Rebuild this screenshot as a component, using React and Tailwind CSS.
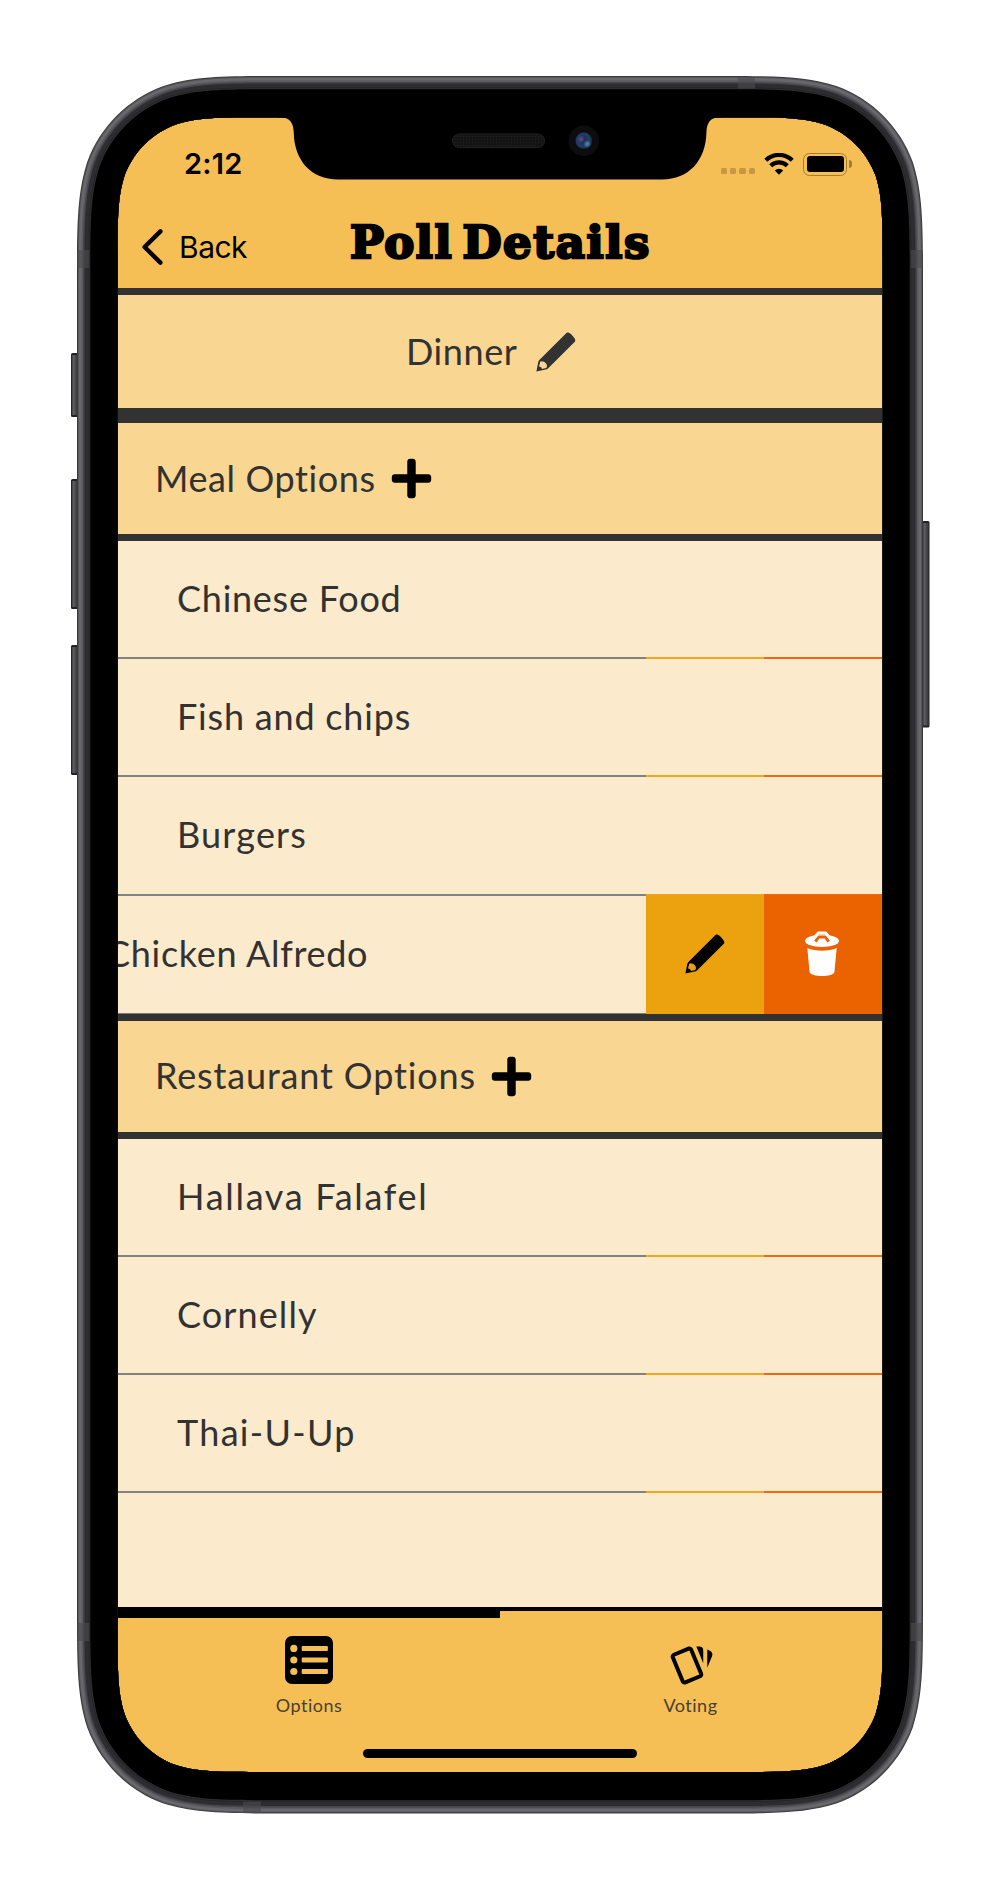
import { FaPlus } from "react-icons/fa";

// Rounded rectangle with continuous-curvature corners.
function squircle(x, y, w, h, r) {
  const a = 1.528665 * r, b = 1.088493 * r, c = 0.868407 * r;
  const d = 0.631494 * r, e = 0.074911 * r, f = 0.372824 * r, g = 0.169059 * r;
  const X = x + w, Y = y + h;
  return [
    `M${x + a},${y} L${X - a},${y}`,
    `C${X - b},${y} ${X - c},${y} ${X - d},${y + e}`,
    `C${X - f},${y + g} ${X - g},${y + f} ${X - e},${y + d}`,
    `C${X},${y + c} ${X},${y + b} ${X},${y + a}`,
    `L${X},${Y - a}`,
    `C${X},${Y - b} ${X},${Y - c} ${X - e},${Y - d}`,
    `C${X - g},${Y - f} ${X - f},${Y - g} ${X - d},${Y - e}`,
    `C${X - c},${Y} ${X - b},${Y} ${X - a},${Y}`,
    `L${x + a},${Y}`,
    `C${x + b},${Y} ${x + c},${Y} ${x + d},${Y - e}`,
    `C${x + f},${Y - g} ${x + g},${Y - f} ${x + e},${Y - d}`,
    `C${x},${Y - c} ${x},${Y - b} ${x},${Y - a}`,
    `L${x},${y + a}`,
    `C${x},${y + b} ${x},${y + c} ${x + e},${y + d}`,
    `C${x + g},${y + f} ${x + f},${y + g} ${x + d},${y + e}`,
    `C${x + c},${y} ${x + b},${y} ${x + a},${y} Z`,
  ].join(" ");
}

const SCREEN = squircle(117.7, 117.5, 764.8, 1654.5, 92);

const RINGS = [
  [0, "#3b3b3f"],
  [1, "#55555a"],
  [2, "#68686d"],
  [4.5, "#5a5a5f"],
  [6, "#45454a"],
  [7.5, "#2d2c31"],
  [11.5, "#242328"],
  [12.3, "#303033"],
  [13.3, "#000000"],
];

const SIDE_BUTTONS = [
  [71, 353, 64],
  [71, 479, 130],
  [71, 645, 130],
  [922, 521, 206.5],
];

const BANDS = [
  [77.5, 250, 11.5, 18],
  [911, 250, 11.5, 18],
  [77.5, 1623, 11.5, 18],
  [911, 1623, 11.5, 18],
  [738, 77.5, 17, 11],
  [243, 1801.5, 18, 11],
];

function PhoneFrame() {
  return (
    <svg className="pointer-events-none absolute inset-0" width="1000" height="1890" viewBox="0 0 1000 1890" aria-hidden="true">
      <defs>
        <linearGradient id="btn" x1="0" x2="1" y1="0" y2="0">
          <stop offset="0" stopColor="#3c3c40" />
          <stop offset="0.3" stopColor="#5d5d62" />
          <stop offset="1" stopColor="#303034" />
        </linearGradient>
        <radialGradient id="lens" cx="0.45" cy="0.45" r="0.55">
          <stop offset="0" stopColor="#1c2148" />
          <stop offset="0.7" stopColor="#1f4068" />
          <stop offset="1" stopColor="#16263c" />
        </radialGradient>
        <radialGradient id="glow1">
          <stop offset="0" stopColor="#6a4a94" />
          <stop offset="1" stopColor="#6a4a94" stopOpacity="0" />
        </radialGradient>
        <radialGradient id="glow2">
          <stop offset="0" stopColor="#4d93b8" />
          <stop offset="1" stopColor="#4d93b8" stopOpacity="0" />
        </radialGradient>
        <pattern id="mesh" width="3" height="3" patternUnits="userSpaceOnUse">
          <rect width="3" height="3" fill="#131313" />
          <circle cx="1.5" cy="1.5" r="0.8" fill="#202020" />
        </pattern>
      </defs>
      {SIDE_BUTTONS.map(([x, y, h]) => (
        <g key={`${x}-${y}`}>
          <rect x={x} y={y} width="7.5" height={h} rx="1.5" fill="#222226" />
          <rect x={x + 0.8} y={y + 2} width="6" height={h - 4} fill="url(#btn)" />
        </g>
      ))}
      {RINGS.map(([i, color]) => (
        <path
          key={i}
          fillRule="evenodd"
          fill={color}
          d={`${squircle(77 + i, 76 + i, 846 - 2 * i, 1737.5 - 2 * i, 136 - i)} ${SCREEN}`}
        />
      ))}
      {BANDS.map(([x, y, w, h]) => (
        <rect key={`${x}-${y}`} x={x} y={y} width={w} height={h} fill="#4b4b4d" opacity="0.6" />
      ))}
      <path
        fill="#000"
        d="M278,116 V117.5 H281 C290,117.5 293.5,123 293.8,133 C294.2,160 311,179.5 338,179.5 H662 C689,179.5 705.8,160 706.4,133 C706.7,123 710,117.5 719,117.5 H722 V116 Z"
      />
      <rect x="452.5" y="134" width="92" height="13.5" rx="6.7" fill="url(#mesh)" stroke="#222222" strokeWidth="1" />
      <circle cx="583.8" cy="140.8" r="15.3" fill="#0d0d0f" />
      <circle cx="583.8" cy="140.8" r="8.3" fill="url(#lens)" />
      <circle cx="581.2" cy="139.3" r="4" fill="url(#glow1)" />
      <circle cx="587.2" cy="144" r="4" fill="url(#glow2)" />
    </svg>
  );
}

function Pencil() {
  return (
    <svg width="40" height="40" viewBox="0 0 40 40" fill="currentColor" fillRule="evenodd">
      <path d="M30.2 1.2 C31.2 .2 32.8 .4 35.4 2.6 L37.6 4.9 C39.6 7.4 39.7 8.8 38.8 9.7 L12.2 36.3 C11.4 37.1 10.6 37.4 9.6 37.6 L.4 39.4 L2.2 30.2 C2.4 29.3 2.8 28.6 3.6 27.8 Z M4.2 29.8 L3 34.5 C4.8 34.6 5.8 35.6 5.9 37 L10.2 36 C11.4 34.4 11.2 32.6 9.6 31.1 C8 29.4 5.8 28.6 4.2 29.8 Z" />
    </svg>
  );
}

function Trash() {
  return (
    <svg width="34" height="46" viewBox="0 0 34 46">
      <path fill="#fff" d="M2.3 17 C10 20.6 24 20.6 31.7 17 L29.4 41.2 C28.6 43.6 23.5 45 17 45 S5.4 43.6 4.6 41.2 Z" />
      <ellipse cx="17" cy="9.8" rx="17" ry="6.2" fill="#fff" />
      <path fill="none" stroke="#eb6200" strokeWidth="3" d="M10.4 10.6 L13.6 6 H20.4 L23.6 10.6" />
      <path fill="none" stroke="#fff" strokeWidth="3" strokeLinejoin="round" d="M10 6 L13.4 2 H20.6 L24 6" />
    </svg>
  );
}

function ListIcon() {
  return (
    <svg width="48" height="48" viewBox="0 0 48 48">
      <rect width="48" height="48" rx="7" fill="#000" />
      <g fill="#f6bf55">
        {[12.4, 24, 35.5].map((y) => (
          <g key={y}>
            <circle cx="8.8" cy={y} r="3.6" />
            <rect x="16.7" y={y - 2.5} width="26.2" height="5" rx="1" />
          </g>
        ))}
      </g>
    </svg>
  );
}

function CardsIcon() {
  return (
    <svg className="translate-y-[6px]" width="48" height="48" viewBox="0 0 24 24" fill="#000">
      <path d="M11.19,2.25C10.93,2.25 10.67,2.31 10.42,2.4L3.06,5.45C2.04,5.87 1.55,7.04 1.97,8.05L6.93,20C7.24,20.77 7.97,21.23 8.74,21.25C9,21.25 9.27,21.22 9.53,21.1L16.9,18.05C17.65,17.74 18.11,17 18.13,16.25C18.14,16 18.09,15.71 18,15.45L13,3.5C12.71,2.73 11.97,2.26 11.19,2.25M14.67,2.25L18.12,10.6V4.25A2,2 0 0,0 16.12,2.25M20.13,3.79V12.82L22.56,6.96C22.97,5.94 22.5,4.78 21.47,4.36M11.19,4.22L16.17,16.24L8.78,19.3L3.8,7.29L11.19,4.22Z" />
    </svg>
  );
}

function StatusBar() {
  return (
    <div className="flex h-[92px] items-start justify-between pt-[29px] pr-[31px] pl-[66px]">
      <span className="font-[Inter,sans-serif] text-[29px] leading-[36px] font-semibold tracking-[0.2px]">2:12</span>
      <div className="flex h-[36px] items-center gap-[9px]">
        <div className="mt-[14px] flex gap-[3px]">
          {[0, 1, 2, 3].map((i) => (
            <span key={i} className="h-[6.5px] w-[6.3px] rounded-[1.5px] bg-[#c59944]" />
          ))}
        </div>
        <svg width="30" height="22" viewBox="0 0 30 22" fill="none" stroke="#000" strokeWidth="4.2">
          <path d="M1.8 7.3 A18.8 18.8 0 0 1 28.2 7.3" />
          <path d="M6.7 12.8 A11.8 11.8 0 0 1 23.3 12.8" />
          <path stroke="none" fill="#000" d="M15 21.8 L10.8 17.4 A6 6 0 0 1 19.2 17.4 Z" />
        </svg>
        <div className="flex items-center gap-[2px]">
          <div className="h-[23px] w-[44px] rounded-[6.5px] border border-[#a27d38] p-[2.5px]">
            <div className="h-full rounded-[3px] bg-black" />
          </div>
          <div className="h-[8px] w-[3px] rounded-r-full bg-[#a27d38]" />
        </div>
      </div>
    </div>
  );
}

function Header() {
  return (
    <header className="h-[178px] border-b-[7px] border-[#323232] bg-[#f6bf55] text-black">
      <StatusBar />
      <div className="grid grid-cols-[232px_300px_1fr] items-center pt-[9px]">
        <button className="flex h-[50px] items-center gap-[16px] pt-[8px] pl-[24px]">
          <svg width="21" height="36" viewBox="0 0 21 36" fill="none" stroke="#000" strokeWidth="4.4" strokeLinecap="round" strokeLinejoin="round">
            <path d="M18.4 2.4 L2.6 18 L18.4 33.6" />
          </svg>
          <span className="font-[Inter,sans-serif] text-[30px] leading-[36px] tracking-[-0.5px]">Back</span>
        </button>
        <h1 className="text-center font-['DejaVu_Serif',serif] text-[45px] leading-[50px] font-bold tracking-[1.6px] whitespace-nowrap [word-spacing:-8px] [-webkit-text-stroke:2.6px_black]">
          Poll Details
        </h1>
      </div>
    </header>
  );
}

function SectionHeader({ children, tracking }) {
  return (
    <div className="flex h-[118px] items-center gap-[13px] border-b-[7px] border-[#323232] bg-[#f9d692] pl-[37px]">
      <span className={`-mt-[2px] ${tracking}`}>{children}</span>
      <FaPlus className="size-[45px] text-black" />
    </div>
  );
}

function Row({ children, tracking }) {
  return (
    <div className="flex h-[118.2px] flex-col">
      <div className={`flex flex-1 items-center pb-[2px] pl-[59px] ${tracking}`}>{children}</div>
      <div className="flex h-[2px]">
        <span className="flex-1 bg-[#83827f]" />
        <span className="w-[118px] bg-[#efa722]" />
        <span className="w-[119px] bg-[#ef6814]" />
      </div>
    </div>
  );
}

function SwipedRow({ children }) {
  return (
    <div className="flex h-[118.2px]">
      <div className="flex w-[528px] items-center border-b border-[#7b7b79]">
        <span className="-mt-[2px] -ml-[12px] tracking-[0.7px] whitespace-nowrap">{children}</span>
      </div>
      <button className="-mt-px grid w-[118px] place-items-center bg-[#eca20f] text-black">
        <Pencil />
      </button>
      <button className="-mt-px grid w-[119px] place-items-center bg-[#eb6200] pr-[3px]">
        <Trash />
      </button>
    </div>
  );
}

function Tab({ icon, label, active }) {
  return (
    <button className="flex flex-col items-center text-[18px] leading-[24px] tracking-[0.5px] text-[#4a4030]">
      <span className={active ? "h-[7px] w-full bg-black" : "h-[7px] w-full"} />
      <span className="mt-[18px] mb-[9px]">{icon}</span>
      {label}
    </button>
  );
}

export default function App() {
  return (
    <div className="relative h-[1890px] w-[1000px] overflow-hidden bg-white">
      <div className="pt-[117px] pl-[118px]">
        <main className="flex h-[1655px] w-[765px] flex-col overflow-hidden bg-[#fbeacb] font-[Lato,sans-serif] text-[36px] text-[#323232] [font-variant-ligatures:none]">
          <Header />
          <div className="flex h-[128px] items-center gap-[18px] border-b-[15px] border-[#323232] bg-[#f9d692] pl-[288px]">
            <span className="-mt-[1px] tracking-[0.6px]">Dinner</span>
            <Pencil />
          </div>
          <SectionHeader tracking="tracking-[0.6px]">Meal Options</SectionHeader>
          <Row tracking="tracking-[0.75px]">Chinese Food</Row>
          <Row tracking="tracking-[0.8px]">Fish and chips</Row>
          <Row tracking="tracking-[1.2px]">Burgers</Row>
          <SwipedRow>Chicken Alfredo</SwipedRow>
          <div className="border-t-[7px] border-[#323232]">
            <SectionHeader tracking="tracking-[0.85px]">Restaurant Options</SectionHeader>
          </div>
          <Row tracking="tracking-[1.7px]">Hallava Falafel</Row>
          <Row tracking="tracking-[1.1px]">Cornelly</Row>
          <Row tracking="tracking-[1.3px]">Thai-U-Up</Row>
          <div className="flex-1" />
          <nav className="h-[165px] shrink-0 border-t-[4px] border-black bg-[#f6bf55]">
            <div className="grid grid-cols-[382px_381px]">
              <Tab icon={<ListIcon />} label="Options" active />
              <Tab icon={<CardsIcon />} label="Voting" />
            </div>
            <div className="mt-[32px] ml-[245px] h-[9px] w-[274px] rounded-full bg-black" />
          </nav>
        </main>
      </div>
      <PhoneFrame />
    </div>
  );
}
